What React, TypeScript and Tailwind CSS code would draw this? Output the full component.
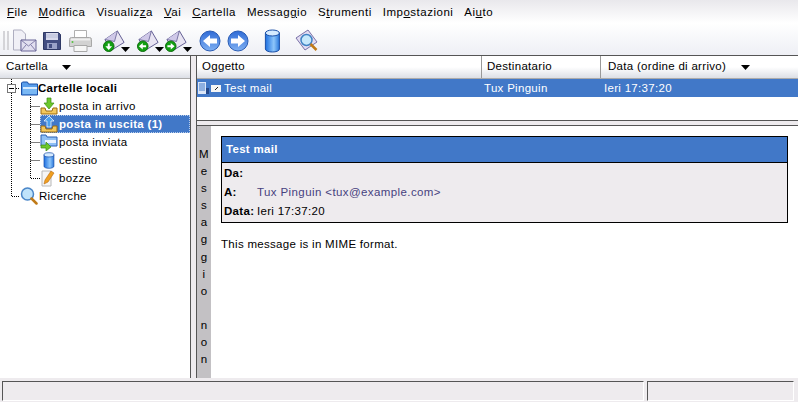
import React from "react";

const menus: [string, string, string][] = [
  ["", "F", "ile"],
  ["", "M", "odifica"],
  ["Visualiz", "z", "a"],
  ["", "V", "ai"],
  ["", "C", "artella"],
  ["Messag", "g", "io"],
  ["S", "t", "rumenti"],
  ["Imp", "o", "stazioni"],
  ["Ai", "u", "to"],
];

function Caret({ className }: { className?: string }) {
  return (
    <svg width="9" height="5" viewBox="0 0 9 5" className={className}>
      <path d="M0 0h9L4.5 5z" fill="#000" />
    </svg>
  );
}

function Envelope({ badge }: { badge: "down" | "left" | "right" }) {
  return (
    <svg width="23" height="23" viewBox="0 0 24 24" className="shrink-0">
      <path d="M2 11 15 2l7 12-13 8z" fill="#e8e4f2" stroke="#5e5a90" />
      <path d="M2 11l10 2 3-11" fill="#cfc8e8" stroke="#5e5a90" strokeWidth=".8" />
      <circle cx="6" cy="18" r="5.5" fill="#12a012" stroke="#0a6a0a" />
      {badge === "down" && <path d="M6 22l-3.500-4H5v-3h2v3h2.500z" fill="#fff" />}
      {badge === "left" && <path d="M2 18l4-3.500V17h3.500v2H6v2.500z" fill="#fff" />}
      {badge === "right" && <path d="M10 18l-4-3.500V17H2.500v2H6v2.500z" fill="#fff" />}
    </svg>
  );
}

function NavArrow({ dir }: { dir: "left" | "right" }) {
  return (
    <svg width="22" height="22" viewBox="0 0 22 22">
      <defs>
        <linearGradient id="nav" x1="0" y1="0" x2="0" y2="1">
          <stop offset="0" stopColor="#2f6bd6" />
          <stop offset="1" stopColor="#7fb0f2" />
        </linearGradient>
      </defs>
      <circle cx="11" cy="11" r="10" fill="url(#nav)" stroke="#2a5cb4" />
      <path
        d={dir === "left" ? "M4 11l7-6v3.500h7v5h-7V17z" : "M18 11l-7-6v3.500H4v5h7V17z"}
        fill="#fff"
      />
    </svg>
  );
}

function Cylinder({ size = 22 }: { size?: number }) {
  return (
    <svg width={size * 0.7} height={size} viewBox="0 0 16 24">
      <defs>
        <linearGradient id="cyl" x1="0" y1="0" x2="1" y2="0">
          <stop offset="0" stopColor="#1d6fe0" />
          <stop offset=".6" stopColor="#8ec6fa" />
          <stop offset="1" stopColor="#2b78dc" />
        </linearGradient>
      </defs>
      <path d="M1 4v16c0 4 14 4 14 0V4z" fill="url(#cyl)" stroke="#1b50a8" />
      <ellipse cx="8" cy="4" rx="7" ry="3" fill="#d6ebff" stroke="#1b50a8" />
    </svg>
  );
}

function Magnifier({ size = 18 }: { size?: number }) {
  return (
    <svg width={size} height={size} viewBox="0 0 18 18">
      <circle cx="7.500" cy="7" r="6" fill="#bfe3fb" stroke="#4a86c8" strokeWidth="1.500" />
      <path d="M11.500 11.500 16.500 16.500" stroke="#c07a18" strokeWidth="2.500" strokeLinecap="round" />
    </svg>
  );
}

function Tray({ up }: { up: boolean }) {
  return (
    <svg width="18" height="18" viewBox="0 0 18 18">
      <path d="M1 11h4l1 3h6l1-3h4v6H1z" fill="#f2c75c" stroke="#9a6a10" />
      <path
        d={up ? "M9 1l5 5h-3v6H7V6H4z" : "M7 1h4v5h3l-5 6-5-6h3z"}
        fill={up ? "#4aa0ee" : "#6cc82c"}
        stroke={up ? "#ffffff" : "#3e8a12"}
        strokeWidth=".7"
      />
    </svg>
  );
}

function Folder() {
  return (
    <svg width="17" height="15" viewBox="0 0 17 15">
      <path d="M.5 14V2l1-1h5l1 2h9v11z" fill="#5a9eea" stroke="#1b50a8" />
      <path d="M2 6h14v2H2z" fill="#d8ecff" />
      <path d="M2 8h14v5H2z" fill="#7ab8f4" />
    </svg>
  );
}

function Sent() {
  return (
    <svg width="18" height="18" viewBox="0 0 18 18">
      <path d="M1 13V2h5l1 2h10v9z" fill="#8fc0f5" stroke="#2a60b4" />
      <path d="M5 7h11v3H5z" fill="#eaf4ff" />
      <path d="M1 12h5V9l5 5-5 4v-3H1z" fill="#6cc82c" stroke="#3e8a12" strokeWidth=".7" />
    </svg>
  );
}

function Draft() {
  return (
    <svg width="16" height="17" viewBox="0 0 16 17">
      <path d="M1 1h9v15H1z" fill="#f6f6f6" stroke="#b8b8b8" />
      <path d="M3 14l1-4 6-9 3 2-6 9z" fill="#f0a020" stroke="#b86a10" strokeWidth=".6" />
    </svg>
  );
}

function TreeRow({ children, label, selected, bold, indent }: { children: React.ReactNode; label: string; selected?: boolean; bold?: boolean; indent: string }) {
  return (
    <div className={`h-[18px] flex items-center ${indent}`}>
      <div className={`h-[18px] flex-1 flex items-center ${selected ? "bg-[#4178c8] text-white font-bold outline outline-dotted outline-[#b9cdea] -outline-offset-1 gap-px" : ""} ${bold ? "font-bold" : "gap-px"}`}>
        <span className="w-[18px] h-[18px] flex items-center justify-center shrink-0 relative">{children}</span>
        <span className="whitespace-nowrap relative pt-[2px]">{label}</span>
      </div>
    </div>
  );
}

const columnHead = "h-[23px] flex items-center bg-gradient-to-b from-white via-white to-[#dcdfe6]";

export default function App() {
  return (
    <div className="w-[798px] h-[402px] overflow-hidden flex flex-col bg-[#eeebee] text-black text-[11.500px] tracking-[0.3px] leading-none font-['Liberation_Sans',Arial,sans-serif]">
      <div className="h-[23px] flex items-center gap-[11px] pl-[7px] pt-[3px] bg-gradient-to-b from-[#e9e8ec] to-white tracking-[0.5px]">
        {menus.map(([a, b, c]) => (
          <span key={a + b + c} className="whitespace-nowrap">
            {a}
            <u>{b}</u>
            {c}
          </span>
        ))}
      </div>

      <div className="h-[33px] flex items-center pl-[3px] pt-[3px] bg-gradient-to-b from-white to-[#eeeff5] border-b border-[#555]">
        <div className="w-[6px] h-[19px] mr-[4px] border-x-2 border-[#d4d4d8]" />
        <svg width="24" height="23" viewBox="0 0 24 23" className="mr-[6px]">
          <path d="M.5 1h8l4 4v6H8v10H.5z" fill="#f0f0f6" stroke="#aeaec0" />
          <path d="M8 11h15v11H8z" fill="#e2dff0" stroke="#6b6698" />
          <path d="M8 11l7.500 6 7.500-6M8 22l5-6M23 22l-5-6" fill="none" stroke="#6b6698" strokeWidth=".8" />
        </svg>
        <svg width="18" height="18" viewBox="0 0 18 18" className="mr-[8px]">
          <path d="M.5.5h15l2 2v15H.5z" fill="#434e82" stroke="#2e3865" />
          <path d="M3 1h12v7H3z" fill="#d8daec" />
          <path d="M3 3h12M3 5h12" stroke="#a6abcd" strokeWidth=".6" />
          <path d="M4 11h10v6H4z" fill="#9aa2c8" />
          <path d="M6 12h3v4H6z" fill="#434e82" />
        </svg>
        <svg width="23" height="22" viewBox="0 0 23 22" className="mr-[11px]">
          <path d="M5.500.5h12v8h-12z" fill="#fff" stroke="#b0b0b0" />
          <path d="M.5 9.500q0-2 2-2h18q2 0 2 2v7h-22z" fill="#d2d2d2" stroke="#a8a8a8" />
          <path d="M2 8.500h19v2H2z" fill="#efefef" />
          <path d="M5 15.500h13v6H5z" fill="#f6f6f6" stroke="#a8a8a8" />
          <circle cx="3.500" cy="12" r="1" fill="#55c040" />
        </svg>
        <span className="flex items-end w-[34px]">
          <Envelope badge="down" />
          <Caret className="-ml-[5px]" />
        </span>
        <span className="flex items-end w-[28px]">
          <Envelope badge="left" />
          <Caret className="-ml-[5px]" />
        </span>
        <span className="flex items-end w-[34px]">
          <Envelope badge="right" />
          <Caret className="-ml-[5px]" />
        </span>
        <span className="flex items-center gap-[6px]">
          <NavArrow dir="left" />
          <NavArrow dir="right" />
        </span>
        <span className="ml-[15px]">
          <Cylinder size={24} />
        </span>
        <span className="ml-[14px]">
          <svg width="24" height="24" viewBox="0 0 24 24">
            <path d="M1 9 13 1l9 12-12 8z" fill="#e2dcf2" stroke="#7a72a8" />
            <circle cx="11.500" cy="11" r="5.500" fill="#c6e8fb" stroke="#3f82c4" strokeWidth="1.500" />
            <path d="M15.500 15l6 6" stroke="#c07a18" strokeWidth="2.500" />
          </svg>
        </span>
      </div>

      <div className="flex-1 min-h-0 flex bg-white">
        <div className="w-[191px] shrink-0 border-r border-[#555]">
          <div className={`${columnHead} pl-[6px] gap-[14px] border-b border-[#aaa]`}>
            <span>Cartella</span>
            <Caret />
          </div>
          <div className="relative">
            <svg width="40" height="125" className="absolute left-0 top-0" fill="none" stroke="#000" strokeDasharray="1 1">
              <path d="M11.500 0V117.500H20" />
              <path d="M30.500 18V99.500H40" />
              <path d="M30.500 27.500H40M30.500 45.500H40M30.500 63.500H40M30.500 81.500H40" />
              <path d="M16 9.500H20" />
            </svg>
            <span className="absolute left-[7px] top-[5px] w-[9px] h-[9px] bg-white border border-[#777] flex items-center justify-center">
              <span className="w-[5px] h-px bg-black" />
            </span>
            <TreeRow label="Cartelle locali" bold indent="pl-[20px]"><Folder /></TreeRow>
            <TreeRow label="posta in arrivo" indent="pl-[40px]"><Tray up={false} /></TreeRow>
            <TreeRow label="posta in uscita (1)" selected indent="pl-[40px]"><Tray up /></TreeRow>
            <TreeRow label="posta inviata" indent="pl-[40px]"><Sent /></TreeRow>
            <TreeRow label="cestino" indent="pl-[40px]"><Cylinder size={17} /></TreeRow>
            <TreeRow label="bozze" indent="pl-[40px]"><Draft /></TreeRow>
            <TreeRow label="Ricerche" indent="pl-[20px]"><Magnifier /></TreeRow>
          </div>
        </div>

        <div className="w-[5px] shrink-0 bg-[#eeebee]" />

        <div className="flex-1 min-w-0 flex flex-col border-l border-[#555]">
          <div className={`${columnHead} border-b border-[#aaa]`}>
            <span className="w-[285px] pl-[5px] h-full flex items-center border-r border-[#999]">Oggetto</span>
            <span className="w-[119px] pl-[5px] h-full flex items-center border-r border-[#999]">Destinatario</span>
            <span className="pl-[7px] flex items-center gap-[15px]">
              Data (ordine di arrivo)
              <Caret />
            </span>
          </div>
          <div className="h-[18px] flex items-center bg-[#4178c8] text-white">
            <span className="w-[285px] flex items-center pl-px">
              <svg width="11" height="12" viewBox="0 0 11 12">
                <path d="M0 0h8v12H0z" fill="#dbe6f8" />
                <path d="M1 2h6M1 4h6M1 6h6M1 8h6" stroke="#4178c8" />
                <path d="M8 6h3v6H8z" fill="#24488a" />
              </svg>
              <svg width="10" height="7" viewBox="0 0 10 7" className="ml-[2px]">
                <path d="M0 0h10v7H0z" fill="#f4f4f4" />
                <path d="M4 5l3-3" stroke="#222" />
              </svg>
              <span className="ml-[3px] pt-[2px]">Test mail</span>
            </span>
            <span className="w-[120px] pl-[2px] pt-[2px]">Tux Pinguin</span>
            <span className="pl-[2px] pt-[2px]">Ieri 17:37:20</span>
          </div>
          <div className="h-[23px] shrink-0" />
          <div className="h-[6px] shrink-0 bg-[#eeebee] border-y border-[#555]" />
          <div className="flex-1 min-h-0 flex">
            <div className="w-[14px] shrink-0 bg-[#c3c1c4] overflow-hidden pt-[20px] flex flex-col items-center leading-[17.100px]">
              {["M", "e", "s", "s", "a", "g", "g", "i", "o", "\u00a0", "n", "o", "n"].map((ch, i) => (
                <span key={i}>{ch}</span>
              ))}
            </div>
            <div className="flex-1 pl-[10px] pr-[10px] pt-[10px]">
              <div className="border border-black bg-[#eeebee]">
                <div className="h-[26px] flex items-center pl-[4px] bg-[#4178c8] text-white font-bold border-b border-black">
                  Test mail
                </div>
                <div className="h-[59px] pl-[2px] pt-[2px] flex flex-col justify-between pb-[1px]">
                  <div className="h-[18px] flex items-center font-bold">Da:</div>
                  <div className="h-[18px] flex items-center">
                    <span className="w-[33px] font-bold">A:</span>
                    <span className="text-[#47427f] tracking-[0.4px]">Tux Pinguin &lt;tux@example.com&gt;</span>
                  </div>
                  <div className="h-[18px] flex items-center">
                    <span className="w-[33px] font-bold">Data:</span>
                    Ieri 17:37:20
                  </div>
                </div>
              </div>
              <p className="mt-[16px]">This message is in MIME format.</p>
            </div>
          </div>
        </div>
      </div>

      <div className="h-[24px] shrink-0 flex gap-[3px] pl-[2px] pr-[4px] pt-[3px] pb-[1px] bg-[#eeebee]">
        <div className="w-[642px] border-t border-l border-[#555] border-r-white border-b-white border-r border-b" />
        <div className="flex-1 border-t border-l border-[#555] border-r-white border-b-white border-r border-b" />
      </div>
    </div>
  );
}
